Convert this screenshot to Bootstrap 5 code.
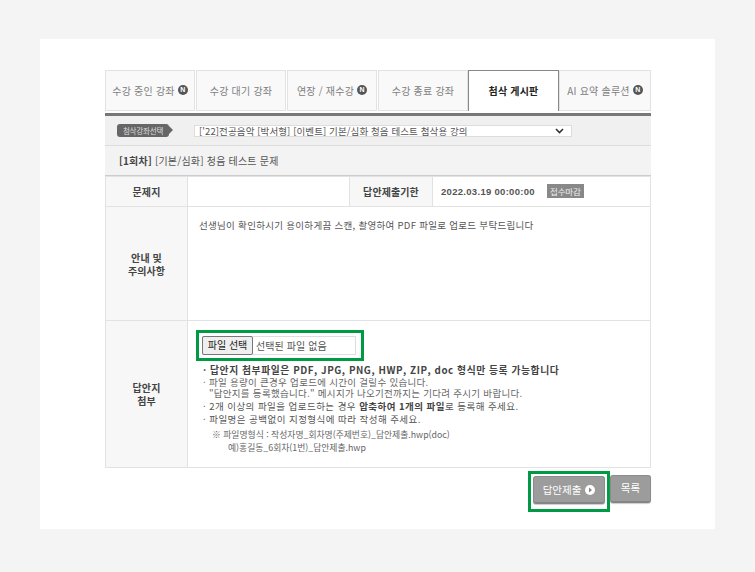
<!DOCTYPE html>
<html lang="ko">
<head>
  <meta charset="UTF-8">
  <title>첨삭 게시판</title>
  <link rel="stylesheet" href="https://cdn.jsdelivr.net/npm/bootstrap@5.3.0/dist/css/bootstrap.min.css" />
  <style>
    body { background: #f4f4f4; font-family: "Noto Sans CJK KR", "Liberation Sans", sans-serif; font-size: 9.5px; color: #555; overflow: hidden; letter-spacing: .1px; }
    .sheet { width: 675px; height: 490px; margin: 39px 0 0 40px; background: #fff; padding: 31px 64px 0 65px; }
    .tabbar { height: 41px; }
    .tabitem { height: 41px; flex: none; background: #f9f9f9; border: 1px solid #e2e2e2; color: #808080; font-size: 10px; letter-spacing: .2px; margin-right: 1px; padding-bottom: 1px; }
    .tabitem.on { background: #fff; border: 1px solid #888; border-bottom: 0; color: #222; font-weight: 700; margin-right: 0; }
    .w1, .w2, .w3 { width: 90px; } .w4 { width: 90px; margin-right: 0; } .w5 { width: 91px; } .w6 { width: 92px; margin-right: 0; }
    .newdot { width: 10px; height: 10px; border-radius: 50%; background: #555; color: #fff; font-size: 7px; font-weight: 700; line-height: 10px; text-align: center; margin-left: 3px; letter-spacing: 0; font-family: "Liberation Sans", sans-serif; }
    .striphead { height: 33px; margin-top: 2px; background: #f0f0f0; border-top: 3px solid #777; border-bottom: 1px solid #ddd; padding-left: 12px; }
    .picklabel { width: 52px; height: 13px; background: #666; color: #ddd; border-radius: 3px; font-size: 7.5px; line-height: 13px; text-align: center; margin-right: 25px; position: relative; letter-spacing: -.2px; }
    .picklabel::after { content: ""; position: absolute; right: -4px; top: 2px; border-left: 4px solid #666; border-top: 4px solid transparent; border-bottom: 4px solid transparent; }
    .pickbox { width: 378px; height: 12px; background: #fff; border: 1px solid #ddd; font-size: 9.5px; line-height: 10px; color: #555; padding: 0 4px; }
    .chev { margin-left: auto; margin-right: 3px; }
    .stripsub { height: 30px; background: #f3f3f3; padding-left: 14px; border-bottom: 1px solid #ccc; font-size: 10px; color: #555; letter-spacing: .2px; }
    .stripsub b { color: #444; }
    .qtable { width: 100%; table-layout: fixed; border-collapse: collapse; margin: 0; }
    .qtable th, .qtable td { border: 1px solid #e2e2e2; vertical-align: middle; padding: 0; }
    .qtable th { background: #f7f7f7; color: #444; font-weight: 700; text-align: center; font-size: 10px; line-height: 13px; }
    .c1 { width: 82px; } .c3 { width: 83px; } .c4 { width: 218px; }
    .r1 { height: 30px; } .r2 { height: 114px; } .r3 { height: 147px; }
    .qtable td.dateval { font-weight: 700; font-size: 9.5px; color: #555; padding-left: 8px; font-family: "Liberation Sans", sans-serif; letter-spacing: .3px; }
    .badge-end { display: inline-block; background: #888; color: #eee; font-size: 8.5px; line-height: 14px; padding: 0 3px; margin-left: 12px; font-weight: 400; letter-spacing: -.1px; font-family: "Noto Sans CJK KR", sans-serif; }
    .qtable td.guide { vertical-align: top; padding: 11px 0 0 11px; color: #555; letter-spacing: .3px; }
    .qtable td.filecell { vertical-align: top; padding: 9px 0 0 8px; }
    .greenbox { border: 3px solid #009944; }
    .filewrap { width: 168px; height: 31px; padding: 3px 5px 3px 3px; }
    .fileinner { border: 1px solid #ddd; height: 19px; font-size: 10px; color: #555; flex: 1; }
    .filebtn { background: #efefef; border: 1px solid #777; border-radius: 2px; height: 19px; width: 51px; margin: -1px 3px 0 -1px; padding: 0; font-size: 10px; color: #222; line-height: 16px; font-family: inherit; }
    .notes { margin: 4px 0 0 7px; padding: 0; list-style: none; line-height: 11px; font-size: 9.5px; color: #666; letter-spacing: .3px; }
    .notes li { margin-bottom: 2px; }
    .notes .lead-note { color: #444; font-weight: 700; font-size: 9.8px; letter-spacing: .55px; margin-bottom: 1px; }
    .notes .dark { color: #555; letter-spacing: .45px; }
    .notes b { color: #444; }
    .fmt { margin: 3px 0 0 16px; font-size: 8.8px; line-height: 13px; color: #666; letter-spacing: 0; }
    .fmt div + div { padding-left: 16px; }
    .actions { margin-top: 3px; height: 41px; }
    .sendbox { width: 82px; height: 41px; padding: 2px 0 0 2px; }
    .graybtn { background: #9c9c9c; border: 1px solid #8c8c8c; border-bottom: 2px solid #858585; border-radius: 3px; color: #fff; height: 28px; font-size: 10.5px; padding: 0; font-family: inherit; box-shadow: 0 1px 1px #ccc; }
    .sendbtn { width: 72px; }
    .listbtn { width: 41px; margin-bottom: 6px; }
  </style>
</head>
<body>
  <div class="sheet">
    <!-- 탭 -->
    <div class="tabbar d-flex">
      <div class="tabitem w1 d-flex align-items-center justify-content-center">수강 중인 강좌<span class="newdot">N</span></div>
      <div class="tabitem w2 d-flex align-items-center justify-content-center">수강 대기 강좌</div>
      <div class="tabitem w3 d-flex align-items-center justify-content-center">연장 / 재수강<span class="newdot">N</span></div>
      <div class="tabitem w4 d-flex align-items-center justify-content-center">수강 종료 강좌</div>
      <div class="tabitem w5 on d-flex align-items-center justify-content-center">첨삭 게시판</div>
      <div class="tabitem w6 d-flex align-items-center justify-content-center">AI 요약 솔루션<span class="newdot">N</span></div>
    </div>

    <!-- 강좌 선택 -->
    <div class="striphead d-flex align-items-center">
      <span class="picklabel">첨삭강좌선택</span>
      <div class="pickbox d-flex align-items-center">
        <span>['22]전공음악 [박서형] [이벤트] 기본/심화 청음 테스트 첨삭용 강의</span>
        <svg class="chev" width="9" height="6" viewBox="0 0 9 6"><path d="M1 1l3.5 3.5L8 1" fill="none" stroke="#333" stroke-width="1.6"/></svg>
      </div>
    </div>
    <div class="stripsub d-flex align-items-center"><b>[1회차]</b>&nbsp;[기본/심화] 청음 테스트 문제</div>

    <!-- 문제 테이블 -->
    <table class="qtable">
      <colgroup><col class="c1"><col><col class="c3"><col class="c4"></colgroup>
      <tr class="r1">
        <th>문제지</th>
        <td></td>
        <th>답안제출기한</th>
        <td class="dateval">2022.03.19 00:00:00<span class="badge-end">접수마감</span></td>
      </tr>
      <tr class="r2">
        <th>안내 및<br>주의사항</th>
        <td colspan="3" class="guide">선생님이 확인하시기 용이하게끔 스캔, 촬영하여 PDF 파일로 업로드 부탁드립니다</td>
      </tr>
      <tr class="r3">
        <th>답안지<br>첨부</th>
        <td colspan="3" class="filecell">
          <div class="greenbox filewrap d-flex">
            <div class="fileinner d-flex align-items-center">
              <button type="button" class="filebtn">파일 선택</button>선택된 파일 없음
            </div>
          </div>
          <ul class="notes">
            <li class="lead-note">· 답안지 첨부파일은 PDF, JPG, PNG, HWP, ZIP, doc 형식만 등록 가능합니다</li>
            <li>· 파일 용량이 큰경우 업로드에 시간이 걸릴수 있습니다.<br>&nbsp;&nbsp;"답안지를 등록했습니다." 메시지가 나오기전까지는 기다려 주시기 바랍니다.</li>
            <li class="dark">· 2개 이상의 파일을 업로드하는 경우 <b>압축하여 1개의 파일</b>로 등록해 주세요.</li>
            <li class="dark">· 파일명은 공백없이 지정형식에 따라 작성해 주세요.</li>
          </ul>
          <div class="fmt">
            <div>※ 파일명형식 : 작성자명_회차명(주제번호)_답안제출.hwp(doc)</div>
            <div>예)홍길동_6회차(1번)_답안제출.hwp</div>
          </div>
        </td>
      </tr>
    </table>

    <!-- 버튼 -->
    <div class="actions d-flex justify-content-end align-items-center">
      <div class="greenbox sendbox">
        <button type="button" class="graybtn sendbtn d-flex align-items-center justify-content-center gap-1">답안제출
          <svg width="10" height="10" viewBox="0 0 10 10"><circle cx="5" cy="5" r="5" fill="#fff"/><path d="M4 2.6L7 5 4 7.4z" fill="#888"/></svg>
        </button>
      </div>
      <button type="button" class="graybtn listbtn">목록</button>
    </div>
  </div>
  <script src="https://cdn.jsdelivr.net/npm/bootstrap@5.3.0/dist/js/bootstrap.bundle.min.js"></script>
</body>
</html>
